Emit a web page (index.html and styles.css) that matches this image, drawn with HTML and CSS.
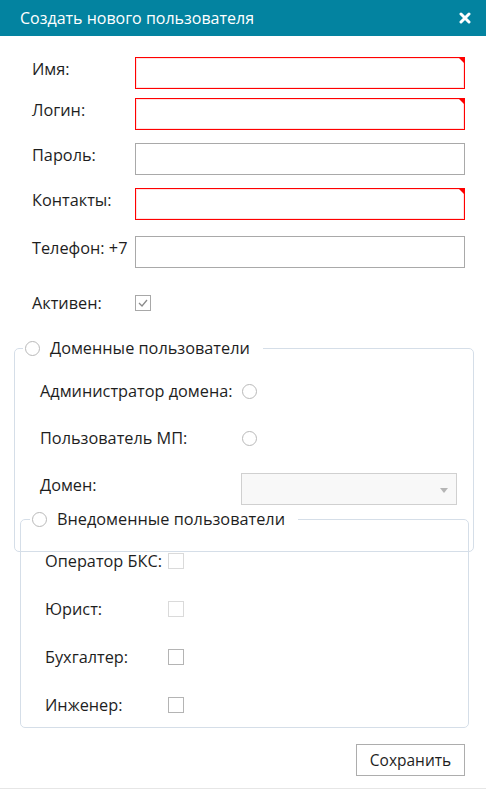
FILE: index.html
```html
<!DOCTYPE html>
<html lang="ru">
<head>
  <meta charset="UTF-8" />
  <meta name="viewport" content="width=device-width, initial-scale=1.0" />
  <title>Создать нового пользователя</title>
  <link rel="stylesheet" href="styles.css">
</head>
<body>

<div class="okno">
  <div class="okno_zagolovok">
    <span class="okno_titul">Создать нового пользователя</span>
    <button type="button" class="zakryt" aria-label="Закрыть">
      <svg width="12" height="12" viewBox="0 0 12 12">
        <path d="M2 2 L10 10 M10 2 L2 10" stroke="#fff" stroke-width="3" stroke-linecap="round" />
      </svg>
    </button>
  </div>

  <form class="okno_telo" novalidate>
    <div class="stroka stroka_1">
      <label for="imya">Имя:</label>
      <div class="pole pole_oshibka"><input type="text" id="imya" /></div>
    </div>
    <div class="stroka stroka_2">
      <label for="login">Логин:</label>
      <div class="pole pole_oshibka"><input type="text" id="login" /></div>
    </div>
    <div class="stroka stroka_3">
      <label for="parol">Пароль:</label>
      <div class="pole"><input type="password" id="parol" /></div>
    </div>
    <div class="stroka stroka_4">
      <label for="kontakty">Контакты:</label>
      <div class="pole pole_oshibka"><input type="text" id="kontakty" /></div>
    </div>
    <div class="stroka stroka_5">
      <label for="telefon">Телефон: +7</label>
      <div class="pole"><input type="text" id="telefon" /></div>
    </div>
    <div class="stroka stroka_aktiv">
      <label>Активен:</label>
      <span class="flazhok flazhok_otmechen">
        <svg width="10" height="8" viewBox="0 0 10 8">
          <path d="M1 4 L4 7 L9 1" fill="none" stroke="#8a8a8a" stroke-width="1.3" />
        </svg>
      </span>
    </div>

    <!-- Доменные пользователи -->
    <fieldset class="gruppa gruppa_domen">
      <legend><span class="radio"></span>Доменные пользователи</legend>

      <div class="punkt punkt_domen punkt_pervyi">
        <span class="punkt_tekst">Администратор домена:</span>
        <span class="radio"></span>
      </div>
      <div class="punkt punkt_domen">
        <span class="punkt_tekst">Пользователь МП:</span>
        <span class="radio"></span>
      </div>
      <div class="punkt punkt_domen punkt_spisok">
        <span class="punkt_tekst">Домен:</span>
        <div class="spisok"><span class="strelka"></span></div>
      </div>

      <!-- Внедоменные пользователи -->
      <fieldset class="gruppa gruppa_vne">
        <legend><span class="radio"></span>Внедоменные пользователи</legend>

        <div class="punkt punkt_vne punkt_pervyi">
          <span class="punkt_tekst">Оператор БКС:</span>
          <span class="flazhok flazhok_blednyi"></span>
        </div>
        <div class="punkt punkt_vne">
          <span class="punkt_tekst">Юрист:</span>
          <span class="flazhok flazhok_blednyi"></span>
        </div>
        <div class="punkt punkt_vne">
          <span class="punkt_tekst">Бухгалтер:</span>
          <span class="flazhok"></span>
        </div>
        <div class="punkt punkt_vne">
          <span class="punkt_tekst">Инженер:</span>
          <span class="flazhok"></span>
        </div>
      </fieldset>
    </fieldset>
  </form>

  <div class="okno_niz">
    <button type="button" class="sohranit">Сохранить</button>
  </div>
</div>

</body>
</html>
```

FILE: styles.css
```css
html, body {
  margin: 0;
  padding: 0;
  height: 100%;
  background: #fff;
  font-family: 'Open Sans', 'Noto Sans', sans-serif;
  font-size: 16.3px;
  color: #1e1e1e;
}

.okno {
  height: 100%;
  display: flex;
  flex-direction: column;
  box-sizing: border-box;
  border-bottom: 1px solid #e6e6e6;
}

.okno_zagolovok {
  height: 36px;
  flex: none;
  background-color: #0383a0;
  display: flex;
  align-items: center;
  justify-content: space-between;
  padding: 0 15px 0 20px;
}

.okno_titul {
  color: #fff;
  font-size: 16px;
}

.zakryt {
  background: none;
  border: none;
  padding: 0;
  width: 12px;
  height: 12px;
  display: flex;
  cursor: pointer;
}

.okno_telo {
  flex: 1;
  margin: 0;
  padding: 21px 21px 0 14px;
}

/* filas de arriba */
.stroka {
  display: flex;
  align-items: flex-start;
  padding-left: 18px;
}

.stroka label {
  width: 103px;
  flex: none;
  line-height: 22px;
  padding-top: 1px;
  white-space: nowrap;
}

.stroka_1 { margin-bottom: 9px; }
.stroka_2 { margin-bottom: 13px; }
.stroka_3 { margin-bottom: 13px; }
.stroka_4 { margin-bottom: 16px; }
.stroka_5 { margin-bottom: 24px; }

.stroka_aktiv {
  align-items: center;
}

.stroka_aktiv label {
  padding-top: 0;
}

.pole {
  position: relative;
  flex: 1;
}

.pole input {
  display: block;
  width: 100%;
  height: 32px;
  box-sizing: border-box;
  border: 1px solid #a9a9a9;
  padding: 4px 6px;
  font-family: inherit;
  font-size: 15px;
  background: #fff;
  outline: none;
}

.pole_oshibka input {
  border-color: #ff0000;
  box-shadow: inset 0 0 0 1px #ffe0e0;
}

.pole_oshibka::after {
  content: '';
  position: absolute;
  top: 0;
  right: 0;
  border-style: solid;
  border-width: 0 7px 7px 0;
  border-color: transparent #ff0000 transparent transparent;
}

.flazhok {
  width: 16px;
  height: 16px;
  box-sizing: border-box;
  border: 1px solid #b4b4b4;
  background: #fff;
  display: inline-flex;
  align-items: center;
  justify-content: center;
  flex: none;
}

.flazhok_otmechen {
  border-color: #a8a8a8;
}

.flazhok_blednyi {
  border-color: #dadada;
}

.radio {
  width: 15px;
  height: 15px;
  box-sizing: border-box;
  border: 1px solid #b9b9b9;
  border-radius: 50%;
  background: #fff;
  display: inline-block;
  flex: none;
}

/* grupos */
.gruppa {
  margin: 23px -9px 0 0;
  padding: 0 4px 0 5px;
  border: 1px solid #d5dee8;
  border-radius: 5px;
  min-width: 0;
}

.gruppa legend {
  display: flex;
  align-items: center;
  gap: 10px;
  padding: 0 13px 0 2px;
  margin-left: 3px;
  line-height: 22px;
}

.gruppa_domen {
  height: 215px;
  box-sizing: border-box;
}

.gruppa_vne {
  margin: 3px 0 0 0;
  padding: 0 0 11px 0;
}

.gruppa_vne legend {
  margin-left: 9px;
}

.punkt {
  display: flex;
  align-items: center;
}

.punkt_domen {
  padding-left: 20px;
  height: 22px;
  margin-top: 25px;
}

.punkt_domen.punkt_pervyi {
  margin-top: 21px;
}

.punkt_domen .punkt_tekst {
  width: 202px;
  flex: none;
  white-space: nowrap;
}

.punkt_spisok {
  height: auto;
  align-items: flex-start;
  margin-top: 24px;
}

.punkt_spisok .punkt_tekst {
  width: 201px;
  line-height: 22px;
  padding-top: 1px;
}

.spisok {
  flex: none;
  width: 216px;
  height: 32px;
  box-sizing: border-box;
  border: 1px solid #d0d0d0;
  background: #f8f8f8;
  position: relative;
}

.strelka {
  position: absolute;
  right: 8px;
  top: 14px;
  border-style: solid;
  border-width: 5px 4px 0 4px;
  border-color: #b5b5b5 transparent transparent transparent;
}

.punkt_vne {
  padding-left: 24px;
  height: 22px;
  margin-top: 26px;
}

.punkt_vne.punkt_pervyi {
  margin-top: 20px;
}

.punkt_vne .punkt_tekst {
  width: 123px;
  flex: none;
  white-space: nowrap;
}

/* pie */
.okno_niz {
  display: flex;
  justify-content: flex-end;
  padding: 0 21px 12px 0;
}

.sohranit {
  width: 109px;
  height: 32px;
  border: 1px solid #adadad;
  background: #fff;
  font-family: inherit;
  font-size: 15.5px;
  color: #1e1e1e;
  cursor: pointer;
}
```
